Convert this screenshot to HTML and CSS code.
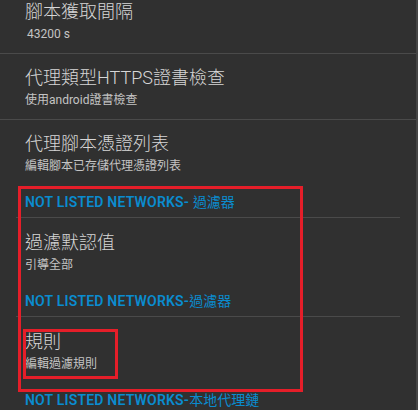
FILE: index.html
```html
<!DOCTYPE html>
<html lang="zh-Hant">
<head>
<meta charset="UTF-8"><meta name="viewport" content="width=device-width, initial-scale=1">
<title>設置</title>
<link rel="stylesheet" href="styles.css">
</head>
<body>
  <div class="screen">
    <div class="list">
      <div class="pref first">
        <div class="title">腳本獲取間隔</div>
        <div class="sub num">43200 s</div>
      </div>
      <div class="pref">
        <div class="title">代理類型HTTPS證書檢查</div>
        <div class="sub">使用android證書檢查</div>
      </div>
      <div class="pref">
        <div class="title">代理腳本憑證列表</div>
        <div class="sub">編輯腳本已存儲代理憑證列表</div>
      </div>

      <div class="cat">NOT LISTED NETWORKS- <span class="cjk">過濾器</span></div>
      <div class="pref incat">
        <div class="title">過濾默認值</div>
        <div class="sub">引導全部</div>
      </div>

      <div class="cat">NOT LISTED NETWORKS-<span class="cjk">過濾器</span></div>
      <div class="pref incat">
        <div class="title">規則</div>
        <div class="sub">編輯過濾規則</div>
      </div>

      <div class="cat">NOT LISTED NETWORKS-<span class="cjk">本地代理鏈</span></div>
    </div>

    <div class="mark mark-outer"></div>
    <div class="mark mark-inner"></div>
    <div class="scrollbar"></div>
  </div>
</body>
</html>
```
FILE: styles.css
```css
html,body{margin:0;background:#303030}
body{font-family:Roboto,"Noto Sans CJK TC",sans-serif;overflow:hidden}
.screen{position:relative;width:418px;height:410px;overflow:hidden}
.list{margin-top:-12px}
.pref{padding:12px 25px 11px;border-top:1px solid #4a4a4a}
.pref.first{border-top:none}
.pref.incat{border-top:none;padding-top:13px}
.title{font-size:18px;line-height:24px;font-weight:300;color:#d6d6d6}
.sub{font-size:12px;line-height:16px;margin-top:2px;color:#c4c4c4}
.sub.num{padding-left:2px}
.cat{margin:0 18px 0 16px;padding:7px 0 5px 9px;border-bottom:1px solid #4a4a4a;font-size:14px;line-height:20px;font-weight:600;letter-spacing:0.2px;color:#0a8ccf}
.cat .cjk{font-weight:400;letter-spacing:0}
.mark{position:absolute;border:3px solid #e51e29;box-sizing:border-box}
.mark-outer{left:18px;top:186px;width:285px;height:206px}
.mark-inner{left:23px;top:329px;width:95px;height:50px}
.scrollbar{position:absolute;right:0;top:0;width:2px;height:410px;background:#454545}
```
